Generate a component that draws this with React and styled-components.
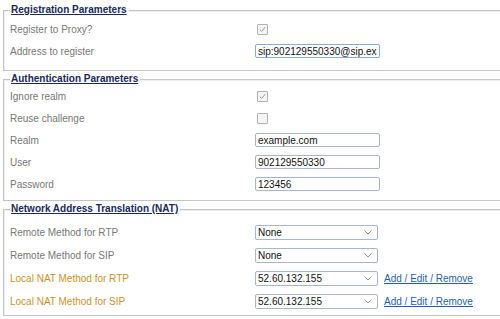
import React from "react";
import styled, { createGlobalStyle } from "styled-components";

const Global = createGlobalStyle`
  html, body { margin: 0; padding: 0; background: #fff; overflow: hidden; }
  body { font-family: "Liberation Sans", Arial, sans-serif; font-size: 10px; }
`;

const Page = styled.div`
  width: 500px;
  height: 319px;
  overflow: hidden;
  padding-top: 4px;
  box-sizing: border-box;
  display: flex;
  flex-direction: column;
  gap: 2px;
`;

const Fieldset = styled.fieldset`
  margin: 0 0 0 3px;
  width: 570px;
  min-width: 0;
  padding: ${(p) => p.$pt}px 6px ${(p) => p.$pb}px 6px;
  border: 1px solid #c4c4c4;
  box-shadow: inset 1px 1px 0 #eee;
`;

const Legend = styled.legend`
  padding: 0 2px 0 1px;
  font-weight: bold;
  font-size: 10px;
  line-height: 12px;
  color: #1a2a5c;
  text-decoration: underline;
`;

const Row = styled.div`
  display: flex;
  align-items: center;
  height: ${(p) => p.$h}px;
`;

const Label = styled.div`
  width: 245px;
  flex: none;
  color: ${(p) => (p.$local ? "#c8922a" : "#777")};
  font-size: 10px;
`;

const Controls = styled.div`
  display: flex;
  align-items: center;
  gap: 6px;
`;

const Check = styled.span`
  display: inline-flex;
  align-items: center;
  justify-content: center;
  width: 9px;
  height: 9px;
  margin-left: 2px;
  border: 1px solid #b2b2b2;
  border-radius: 1px;
  background: #f4f4f4;
`;

const TextInput = styled.input`
  box-sizing: border-box;
  width: 125px;
  height: 14px;
  padding: 0 2px;
  margin: 0;
  border: 1px solid ${(p) => (p.$focus ? "#86acdc" : "#a8b6c8")};
  border-radius: 2px;
  font-family: "Liberation Sans", Arial, sans-serif;
  font-size: 10px;
  color: #111;
  background: #fff;
  outline: none;
`;

const SelectBox = styled.label`
  box-sizing: border-box;
  display: inline-flex;
  align-items: center;
  width: 123px;
  height: 15px;
  border: 1px solid #a9b7ca;
  border-radius: 2px;
  background: #fff;
  padding-right: 5px;
`;

const Select = styled.select`
  appearance: none;
  flex: 1;
  min-width: 0;
  border: none;
  background: transparent;
  padding: 0 0 0 2px;
  margin: 0;
  height: 13px;
  font-family: "Liberation Sans", Arial, sans-serif;
  font-size: 10px;
  color: #111;
  outline: none;
`;

const Link = styled.a`
  color: #1f5fae;
  text-decoration: underline;
  font-size: 10px;
  cursor: pointer;
`;

const Chevron = () => (
  <svg width="8" height="5" viewBox="0 0 8 5">
    <path d="M0.5 0.5 L4 4 L7.5 0.5" fill="none" stroke="#8a8a8a" strokeWidth="0.9" />
  </svg>
);

const Checkbox = ({ checked }) => (
  <Check>
    {checked && (
      <svg width="7" height="7" viewBox="0 0 7 7">
        <path d="M0.8 3.6 L2.7 5.4 L6.2 1.2" fill="none" stroke="#9a9a9a" strokeWidth="1" />
      </svg>
    )}
  </Check>
);

const Dropdown = ({ value }) => (
  <SelectBox>
    <Select defaultValue={value}>
      <option>{value}</option>
    </Select>
    <Chevron />
  </SelectBox>
);

export default function App() {
  return (
    <>
      <Global />
      <Page>
        <Fieldset $pt={2} $pb={8}>
          <Legend>Registration Parameters</Legend>
          <Row $h={22}>
            <Label>Register to Proxy?</Label>
            <Controls><Checkbox checked /></Controls>
          </Row>
          <Row $h={22}>
            <Label>Address to register</Label>
            <Controls><TextInput $focus defaultValue="sip:902129550330@sip.example.com" /></Controls>
          </Row>
        </Fieldset>

        <Fieldset $pt={0} $pb={5}>
          <Legend>Authentication Parameters</Legend>
          <Row $h={22}>
            <Label>Ignore realm</Label>
            <Controls><Checkbox checked /></Controls>
          </Row>
          <Row $h={22}>
            <Label>Reuse challenge</Label>
            <Controls><Checkbox /></Controls>
          </Row>
          <Row $h={22}>
            <Label>Realm</Label>
            <Controls><TextInput defaultValue="example.com" /></Controls>
          </Row>
          <Row $h={22}>
            <Label>User</Label>
            <Controls><TextInput defaultValue="902129550330" /></Controls>
          </Row>
          <Row $h={22}>
            <Label>Password</Label>
            <Controls><TextInput defaultValue="123456" /></Controls>
          </Row>
        </Fieldset>

        <Fieldset $pt={6} $pb={2}>
          <Legend>Network Address Translation (NAT)</Legend>
          <Row $h={23}>
            <Label>Remote Method for RTP</Label>
            <Controls><Dropdown value="None" /></Controls>
          </Row>
          <Row $h={23}>
            <Label>Remote Method for SIP</Label>
            <Controls><Dropdown value="None" /></Controls>
          </Row>
          <Row $h={23}>
            <Label $local>Local NAT Method for RTP</Label>
            <Controls>
              <Dropdown value="52.60.132.155" />
              <Link>Add / Edit / Remove</Link>
            </Controls>
          </Row>
          <Row $h={23}>
            <Label $local>Local NAT Method for SIP</Label>
            <Controls>
              <Dropdown value="52.60.132.155" />
              <Link>Add / Edit / Remove</Link>
            </Controls>
          </Row>
        </Fieldset>
      </Page>
    </>
  );
}
